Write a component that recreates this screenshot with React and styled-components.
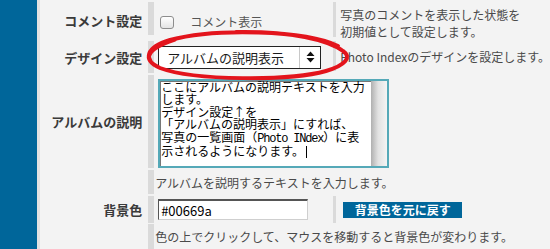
import React from "react";
import styled, { createGlobalStyle } from "styled-components";

const Global = createGlobalStyle`
  html, body {
    margin: 0;
    padding: 0;
    background: #f3f3f3;
  }
  body {
    font-family: "Noto Sans CJK JP", "Noto Sans", sans-serif;
  }
`;

const Page = styled.div`
  position: relative;
  display: flex;
  width: 550px;
  height: 249px;
  overflow: hidden;
  background: #f3f3f3;
`;

const Sidebar = styled.div`
  width: 40px;
  background: #00669a;
  border-right: 3px solid #e2e2e2;
`;

const Content = styled.div`
  flex: 1;
  display: flex;
  flex-direction: column;
  gap: 2px;
  padding-top: 2px;
`;

const Row = styled.div`
  display: grid;
  grid-template-columns: 108px 185px 1fr;
  align-items: center;
  height: ${(p) => p.$h}px;
`;

const Label = styled.div`
  text-align: right;
  padding-right: 6px;
  font-size: 13px;
  font-weight: bold;
  color: #3a3a3a;
  white-space: nowrap;
`;

const ValueCell = styled.div`
  align-self: ${(p) => (p.$h ? "start" : "stretch")};
  height: ${(p) => (p.$h ? `${p.$h}px` : "auto")};
  grid-column: ${(p) => (p.$wide ? "2 / 4" : "auto")};
  box-sizing: border-box;
  border-left: 6px solid #dadada;
  padding: ${(p) => p.$pt || 0}px 0 0 4px;
  display: flex;
  align-items: ${(p) => (p.$pt ? "flex-start" : "center")};
`;

const DescCell = styled.div`
  align-self: start;
  height: ${(p) => p.$h}px;
  box-sizing: border-box;
  border-left: 3px solid #dadada;
  padding: ${(p) => p.$pt || 0}px 0 0 4px;
  display: flex;
  flex-direction: column;
  justify-content: ${(p) => (p.$pt ? "flex-start" : "center")};
  font-size: 12px;
  line-height: 17px;
  color: #4a4a4a;
  white-space: nowrap;
`;

const Note = styled.div`
  grid-column: 2 / 4;
  align-self: stretch;
  border-left: 6px solid #dadada;
  padding-left: 1px;
  display: flex;
  align-items: center;
  font-size: 12px;
  color: #4a4a4a;
  white-space: nowrap;
`;

const CheckRow = styled.label`
  display: flex;
  align-items: center;
  gap: 16px;
  font-size: 12px;
  line-height: 14px;
  color: #555;
`;

const CheckBox = styled.span`
  display: block;
  width: 12px;
  height: 11px;
  margin-left: 2px;
  border: 1px solid #8d8d8d;
  border-radius: 3px;
  background: linear-gradient(#ffffff, #e4e4e4);
`;

const Select = styled.div`
  display: flex;
  width: 163px;
  height: 23px;
  box-sizing: border-box;
  border: 1px solid #222;
  background: #fff;
`;

const SelectText = styled.div`
  flex: 1;
  padding-left: 8px;
  font-size: 13px;
  line-height: 21px;
  color: #1a1a1a;
`;

const SelectArrows = styled.div`
  width: 20px;
  border-left: 1px solid #c8c8c8;
  display: flex;
  align-items: center;
  justify-content: center;
`;

const TextBox = styled.div`
  display: flex;
  width: 231px;
  height: 89px;
  margin-top: 2px;
  box-sizing: border-box;
  border: 2px solid #55a9b8;
  background: #fff;
  box-shadow: inset 1px 1px 0 #777;
`;

const TextBody = styled.div`
  flex: 1;
  padding: 0 0 0 1px;
  font-size: 12px;
  line-height: 12.5px;
  color: #000;
  white-space: nowrap;
`;

const Latin = styled.span`
  font-family: "Liberation Mono", monospace;
  letter-spacing: -1.2px;
`;

const Caret = styled.span`
  display: inline-block;
  width: 1px;
  height: 12px;
  margin-left: 2px;
  vertical-align: -2px;
  background: #000;
`;

const ScrollShade = styled.div`
  width: 16px;
  background: linear-gradient(to right, #b0b0b0, #e2e2e2 45%, #f4f4f4);
`;

const ColorInput = styled.input`
  width: 150px;
  height: 21px;
  box-sizing: border-box;
  margin: 0;
  padding: 0 0 0 2px;
  border: 1px solid #cfcfcf;
  border-top: 2px solid #555;
  border-left: 1px solid #555;
  background: #fff;
  font-family: "Noto Sans CJK JP", sans-serif;
  font-size: 13px;
  color: #000;
  outline: none;
`;

const ResetButton = styled.button`
  width: 119px;
  height: 16px;
  margin: 0 0 0 3px;
  padding: 0;
  border: none;
  background: #00669a;
  color: #fff;
  font-family: "Noto Sans CJK JP", sans-serif;
  font-size: 12px;
  font-weight: bold;
  line-height: 16px;
`;

const Scribble = styled.svg`
  position: absolute;
  left: 0;
  top: 0;
  pointer-events: none;
`;

const App = () => (
  <Page>
    <Global />
    <Sidebar />
    <Content>
      <Row $h={38}>
        <Label>コメント設定</Label>
        <ValueCell $h={33} $pt={13}>
          <CheckRow>
            <CheckBox />
            コメント表示
          </CheckRow>
        </ValueCell>
        <DescCell $h={35} $pt={4}>
          <span>写真のコメントを表示した状態を</span>
          <span>初期値として設定します。</span>
        </DescCell>
      </Row>

      <Row $h={32}>
        <Label>デザイン設定</Label>
        <ValueCell>
          <Select>
            <SelectText>アルバムの説明表示</SelectText>
            <SelectArrows>
              <svg width="9" height="12" viewBox="0 0 9 12">
                <path d="M4.5 0.5 L8.5 5 L0.5 5 Z M0.5 7 L8.5 7 L4.5 11.5 Z" fill="#111" />
              </svg>
            </SelectArrows>
          </Select>
        </ValueCell>
        <DescCell $h={30}>Photo Indexのデザインを設定します。</DescCell>
      </Row>

      <Row $h={94}>
        <Label>アルバムの説明</Label>
        <ValueCell $wide $pt={2}>
          <TextBox>
            <TextBody>
              ここにアルバムの説明テキストを入力
              <br />
              します。
              <br />
              デザイン設定↑を
              <br />
              「アルバムの説明表示」にすれば、
              <br />
              写真の一覧画面（<Latin>Photo INdex</Latin>）に表
              <br />
              示されるようになります。
              <Caret />
            </TextBody>
            <ScrollShade />
          </TextBox>
        </ValueCell>
      </Row>

      <Row $h={25}>
        <Label />
        <Note>アルバムを説明するテキストを入力します。</Note>
      </Row>

      <Row $h={26}>
        <Label>背景色</Label>
        <ValueCell>
          <ColorInput defaultValue="#00669a" />
        </ValueCell>
        <DescCell $h={27}>
          <ResetButton>背景色を元に戻す</ResetButton>
        </DescCell>
      </Row>

      <Row $h={25}>
        <Label />
        <Note>色の上でクリックして、マウスを移動すると背景色が変わります。</Note>
      </Row>
    </Content>

    <Scribble width="550" height="249" viewBox="0 0 550 249">
      <path
        d="M338 46 C 305 30, 215 28, 170 40 C 146 47, 142 60, 160 68 C 195 81, 290 81, 326 71 C 346 65, 352 57, 343 51 C 328 40, 292 31, 236 32"
        fill="none"
        stroke="#e3141c"
        strokeWidth="4"
        strokeLinecap="round"
      />
      <path
        d="M150 55 C 152 50, 160 45, 175 40"
        fill="none"
        stroke="#e3141c"
        strokeWidth="3"
        strokeLinecap="round"
      />
    </Scribble>
  </Page>
);

export default App;
